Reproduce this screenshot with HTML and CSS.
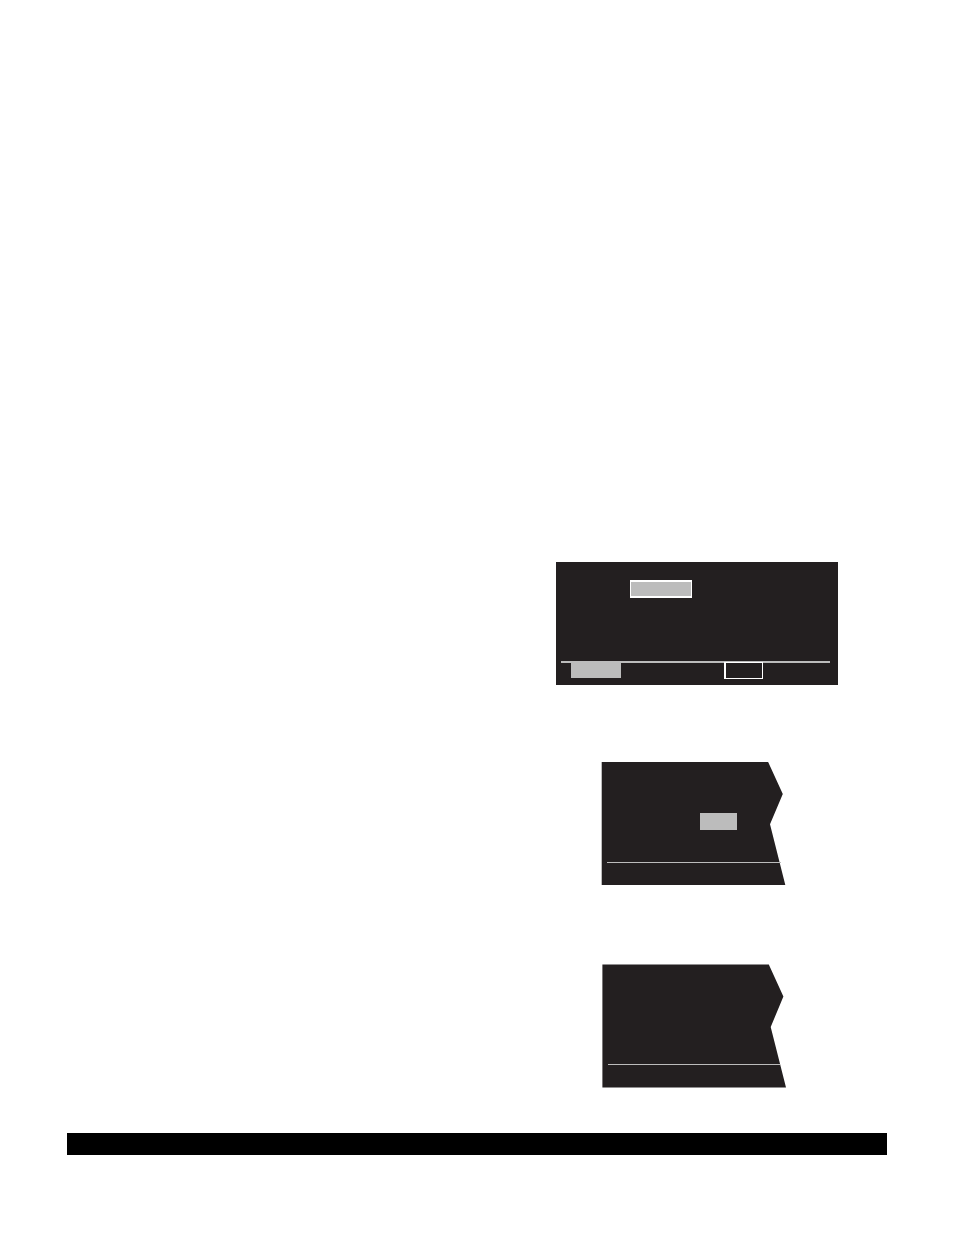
FILE: index.html
```html
<!DOCTYPE html>
<html lang="en">
<head>
<meta charset="utf-8">
<title>Display screens</title>
<link rel="stylesheet" href="styles.css">
</head>
<body>
<main class="page">
  <section class="figures">
    <div class="screen">
      <span class="field"></span>
      <div class="softkeys">
        <span class="key key-filled"></span>
        <span class="key key-outlined"></span>
      </div>
    </div>
    <svg class="torn" viewBox="0 0 186 125" aria-hidden="true">
      <path class="shade" d="M.7 1V124.1H184.3L169 63.3 181.8 33 167.1.9H46V1Z"/>
      <rect class="light" x="99" y="52" width="37" height="17"/>
      <rect class="light" x="6" y="101" width="174" height="1"/>
    </svg>
    <svg class="torn" viewBox="0 0 186 125" aria-hidden="true">
      <path class="shade" d="M1.4 1.4V124.4H185L169.7 64 182.4 33.5 167.8 1.4Z"/>
      <rect class="light" x="7" y="101" width="172" height="1"/>
    </svg>
  </section>
  <footer class="footer-bar"></footer>
</main>
</body>
</html>
```
FILE: styles.css
```css
* {
  box-sizing: border-box;
}

body {
  margin: 0;
  background: #fff;
  font-family: "Liberation Sans", sans-serif;
}

.page {
  display: flex;
  flex-direction: column;
  gap: 45px;
  min-height: 100vh;
  padding: 562px 67px 80px;
}

.figures {
  display: flex;
  flex-direction: column;
  align-self: flex-end;
  gap: 77px;
  width: 282px;
  margin-right: 49px;
}

.screen {
  display: flex;
  flex-direction: column;
  justify-content: space-between;
  height: 123px;
  margin-bottom: -1px;
  padding: 18px 8px 6px 5px;
  background: #231f20;
}

.field {
  width: 62px;
  height: 18px;
  margin-left: 69px;
  border: solid #fff;
  border-width: 2px 1px;
  background: #bcbcbc;
}

.softkeys {
  display: flex;
  gap: 103px;
  padding-left: 10px;
  border-top: 2px solid #bcbcbc;
}

.key-filled {
  width: 50px;
  height: 15px;
  background: #bcbcbc;
}

.key-outlined {
  width: 39px;
  height: 17px;
  margin-top: -1px;
  border: 1px solid #fff;
  border-left-width: 2px;
}

.torn {
  display: block;
  width: 186px;
  height: 125px;
  margin-left: 45px;
}

.shade {
  fill: #231f20;
}

.light {
  fill: #bcbcbc;
}

.footer-bar {
  height: 22px;
  background: #000;
}
```
